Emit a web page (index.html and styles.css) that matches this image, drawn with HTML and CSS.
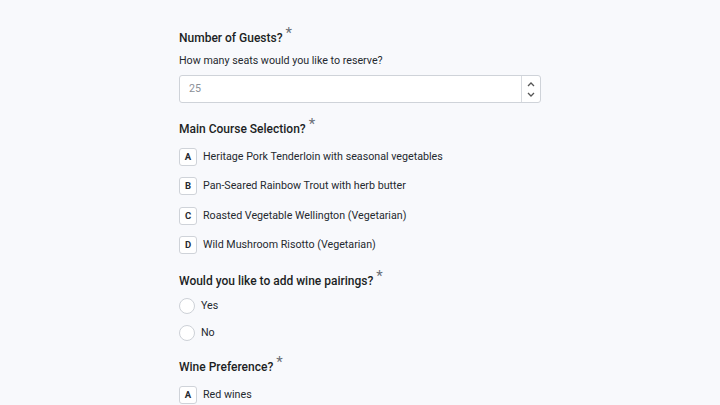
FILE: index.html
```html
<!DOCTYPE html>
<html>
<head>
<meta charset="utf-8">
<link rel="stylesheet" href="styles.css">
</head>
<body>
<main class="form">
  <section class="q q-guests">
    <h2 class="q-title">Number of Guests?<span class="req">*</span></h2>
    <p class="q-desc">How many seats would you like to reserve?</p>
    <div class="num">
      <span class="num-val">25</span>
      <span class="num-spin">
        <svg width="10" height="8" viewBox="0 0 10 8"><path d="M2 6 L5 3 L8 6" fill="none" stroke="#555" stroke-width="1.3"/></svg>
        <svg width="10" height="8" viewBox="0 0 10 8"><path d="M2 2 L5 5 L8 2" fill="none" stroke="#555" stroke-width="1.3"/></svg>
      </span>
    </div>
  </section>

  <section class="q">
    <h2 class="q-title">Main Course Selection?<span class="req">*</span></h2>
    <ul class="opts">
      <li class="opt"><span class="key">A</span>Heritage Pork Tenderloin with seasonal vegetables</li>
      <li class="opt"><span class="key">B</span>Pan-Seared Rainbow Trout with herb butter</li>
      <li class="opt"><span class="key">C</span>Roasted Vegetable Wellington (Vegetarian)</li>
      <li class="opt"><span class="key">D</span>Wild Mushroom Risotto (Vegetarian)</li>
    </ul>
  </section>

  <section class="q q-after-opts">
    <h2 class="q-title">Would you like to add wine pairings?<span class="req">*</span></h2>
    <ul class="radios">
      <li class="radio"><span class="circle"></span>Yes</li>
      <li class="radio"><span class="circle"></span>No</li>
    </ul>
  </section>

  <section class="q">
    <h2 class="q-title">Wine Preference?<span class="req">*</span></h2>
    <ul class="opts">
      <li class="opt"><span class="key">A</span>Red wines</li>
    </ul>
  </section>
</main>
</body>
</html>
```

FILE: styles.css
```css
* { box-sizing: border-box; }
html, body { margin: 0; padding: 0; }
body {
  background: #f8f9fc;
  font-family: Roboto, "Liberation Sans", sans-serif;
  color: #1f2329;
  height: 405px;
  overflow: hidden;
}
.form {
  width: 362px;
  margin-left: 179px;
  padding-top: 27px;
  display: flex;
  flex-direction: column;
  gap: 15px;
}
.q-after-opts { margin-top: 1px; }
.q-title {
  margin: 0;
  font-size: 12px;
  font-weight: 500;
  line-height: 20px;
  color: #1c1f24;
}
.req {
  color: #6b7078;
  font-weight: 400;
  font-size: 15px;
  margin-left: 3px;
  position: relative;
  top: -4px;
}
.q-desc {
  margin: 5px 0 6px;
  font-size: 10.7px;
  line-height: 16px;
  color: #25292f;
}
.num {
  display: flex;
  height: 28px;
  background: #fff;
  border: 1px solid #cfd3d9;
  border-radius: 3px;
}
.num-val {
  flex: 1;
  padding-left: 9px;
  font-size: 10.7px;
  line-height: 26px;
  color: #8b9097;
}
.num-spin {
  width: 19px;
  border-left: 1px solid #d8dbe0;
  display: flex;
  flex-direction: column;
  align-items: center;
  justify-content: center;
  gap: 3px;
}
.opts, .radios {
  list-style: none;
  margin: 9px 0 0;
  padding: 0;
  display: flex;
  flex-direction: column;
}
.opts { gap: 11.4px; }
.opt {
  display: flex;
  align-items: center;
  gap: 6px;
  font-size: 10.7px;
  line-height: 18px;
  color: #25292f;
}
.key {
  width: 18px;
  height: 18px;
  border: 1px solid #cfd3d9;
  border-radius: 3px;
  background: #fff;
  font-size: 9.5px;
  font-weight: 700;
  display: flex;
  align-items: center;
  justify-content: center;
  color: #25292f;
}
.radios { gap: 11px; margin-top: 7px; }
.radio {
  display: flex;
  align-items: center;
  gap: 6px;
  font-size: 10.7px;
  line-height: 16px;
  color: #25292f;
}
.circle {
  width: 16px;
  height: 16px;
  border: 1px solid #cdd1d7;
  border-radius: 50%;
  background: #fff;
}
```
